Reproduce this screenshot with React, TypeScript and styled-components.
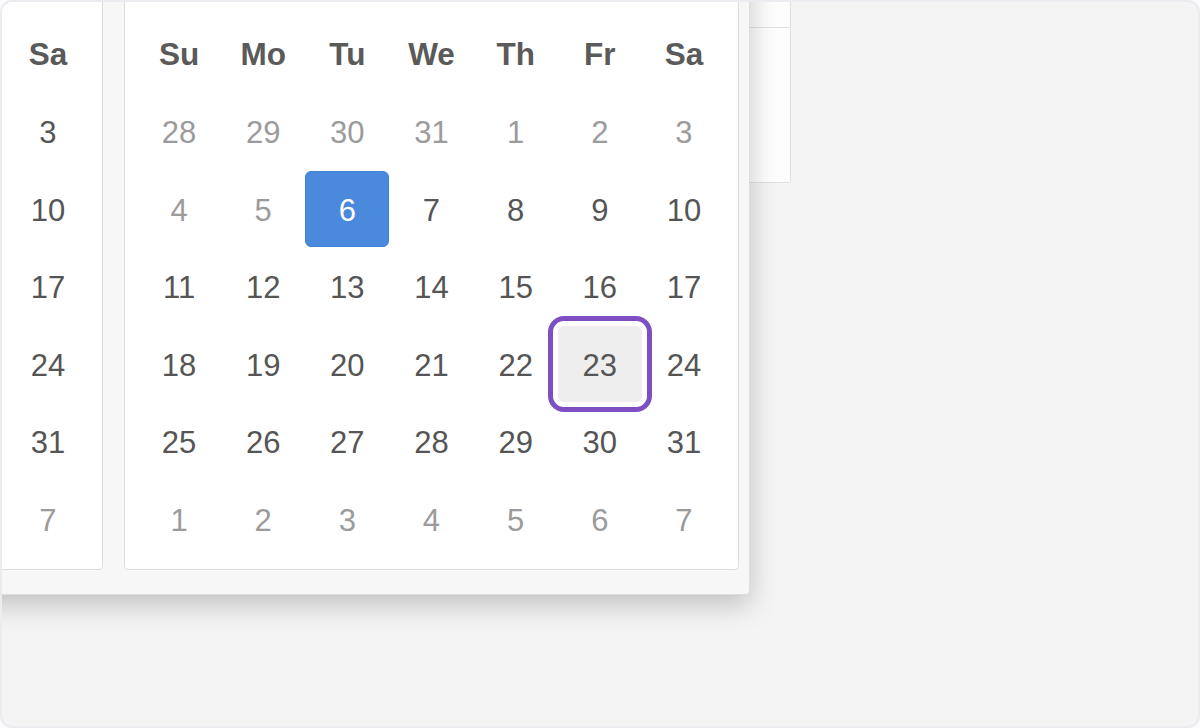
import React from 'react'
import styled, { createGlobalStyle } from 'styled-components'

const GlobalStyle = createGlobalStyle`
  html, body {
    margin: 0;
    padding: 0;
    background: #fbfbfd;
  }
  body {
    font-family: "Liberation Sans", Arial, sans-serif;
  }
  * {
    box-sizing: border-box;
  }
`

const Frame = styled.div`
  position: relative;
  width: 1200px;
  height: 728px;
  border: 2px solid #ececf0;
  border-radius: 12px;
  background: #f4f4f4;
  overflow: hidden;
`

// page content that sits behind the dropdown
const Card = styled.div`
  margin: -20px 0 0 558px;
  width: 231px;
  height: 201px;
  border: 1px solid #e1e1e1;
  border-radius: 3px;
  background: #fdfdfd;
`
const CardHeader = styled.div`
  height: 45px;
  border-bottom: 1px solid #e3e3e3;
`

const Dropdown = styled.div`
  position: absolute;
  top: -71px;
  left: -525px;
  display: flex;
  gap: 21px;
  padding: 10px 10px 24px 10px;
  border: 1px solid #dedede;
  border-radius: 4px;
  background: #f7f7f7;
  box-shadow: 0 10px 28px rgba(0, 0, 0, 0.21);
`

const Calendar = styled.div`
  width: 615px;
  padding: 10px 12px 12px 12px;
  border: 1px solid #dddddd;
  border-radius: 4px;
  background: #fff;
`
const MonthRow = styled.div`
  display: flex;
  align-items: center;
  justify-content: space-between;
  height: 60px;
  padding: 0 24px;
  font-size: 30px;
  font-weight: 700;
  color: #555;
`
const Arrow = styled.span`
  font-size: 28px;
  color: #555;
`

const Grid = styled.div`
  display: grid;
  grid-template-columns: repeat(7, 1fr);
  grid-template-rows: 79px repeat(6, 76px);
  row-gap: 1.5px;
`
const WeekDay = styled.div`
  display: flex;
  align-items: center;
  justify-content: center;
  padding-top: 4px;
  font-size: 31.5px;
  font-weight: 700;
  color: #5a5a5a;
`
const Day = styled.div<{ $muted?: boolean; $active?: boolean; $focus?: boolean }>`
  display: flex;
  align-items: center;
  justify-content: center;
  padding-top: 3px;
  border: 1px solid ${({ $active }) => ($active ? '#3f80d8' : 'transparent')};
  border-radius: 6px;
  font-size: 31px;
  color: ${({ $muted, $active }) => ($active ? '#fff' : $muted ? '#9b9b9b' : '#555')};
  background: ${({ $active, $focus }) => ($active ? '#4a89dc' : $focus ? '#eeeeee' : 'transparent')};
  outline: ${({ $focus }) => ($focus ? '5px solid #7e4fc2' : 'none')};
  outline-offset: 5px;
`

const WEEK = ['Su', 'Mo', 'Tu', 'We', 'Th', 'Fr', 'Sa']

type Cell = { day: number; muted: boolean }

// month starting on Thursday, 31 days, previous month with 31 days
const buildDays = (minDay: number): Cell[] => {
  const cells: Cell[] = []
  for (let d = 28; d <= 31; d++) cells.push({ day: d, muted: true })
  for (let d = 1; d <= 31; d++) cells.push({ day: d, muted: d < minDay })
  for (let d = 1; cells.length < 42; d++) cells.push({ day: d, muted: true })
  return cells
}

const MonthCalendar = ({ label, minDay, active, focus }: {
  label: string
  minDay: number
  active?: number
  focus?: number
}) => {
  const cells = buildDays(minDay)
  return (
    <Calendar>
      <MonthRow>
        <Arrow>‹</Arrow>
        {label}
        <Arrow>›</Arrow>
      </MonthRow>
      <Grid>
        {WEEK.map(w => <WeekDay key={w}>{w}</WeekDay>)}
        {cells.map((c, i) => {
          const inMonth = i >= 4 && i < 35
          return (
            <Day
              key={i}
              $muted={c.muted}
              $active={inMonth && c.day === active}
              $focus={inMonth && c.day === focus}
            >
              {c.day}
            </Day>
          )
        })}
      </Grid>
    </Calendar>
  )
}

const App = () => {
  return (
    <>
      <GlobalStyle />
      <Frame>
        <Card>
          <CardHeader />
        </Card>
        <Dropdown>
          <MonthCalendar label="Mar 2018" minDay={1} />
          <MonthCalendar label="Aug 2019" minDay={6} active={6} focus={23} />
        </Dropdown>
      </Frame>
    </>
  )
}

export default App
